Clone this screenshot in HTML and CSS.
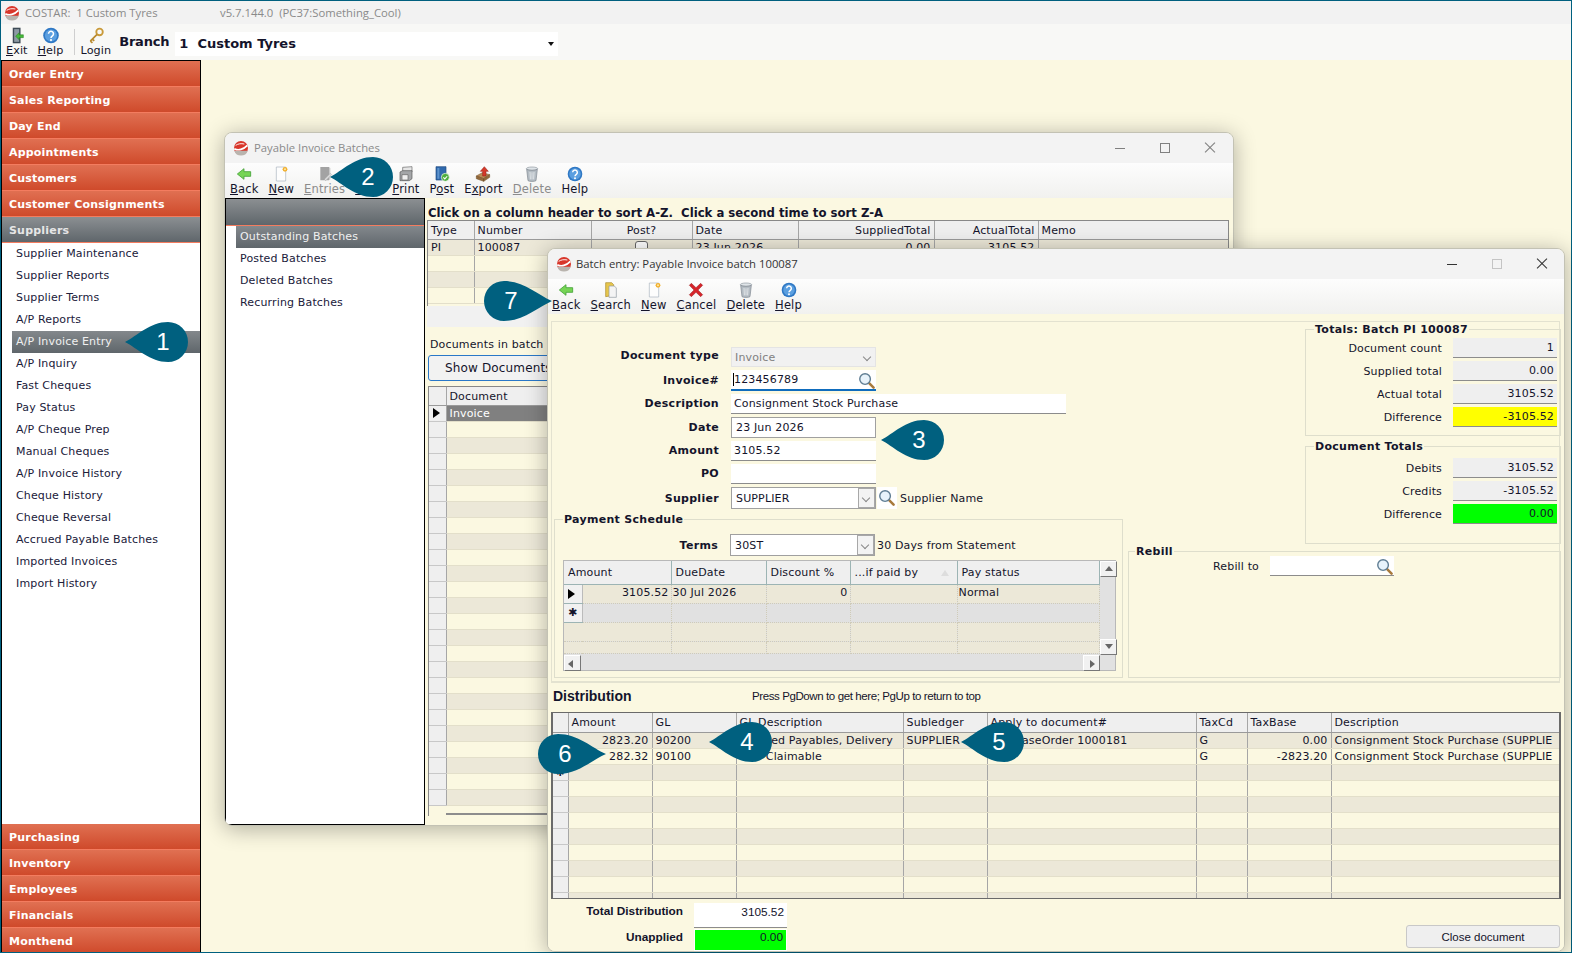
FILE: index.html
```html
<!DOCTYPE html>
<html lang="en">
<head>
  <meta charset="UTF-8"/>
  <title>COSTAR: 1 Custom Tyres</title>
  <link rel="stylesheet" href="styles.css">
</head>
<body>
  <!-- icon set -->
  <svg class="sprite" aria-hidden="true">
    <symbol id="i-logo" viewBox="0 0 24 24">
      <circle cx="12" cy="12" r="10.5" fill="#d8362a"/>
      <path d="M2 16a10.5 10.5 0 0 0 20 0z" fill="#b9b4ae"/>
      <path d="M2 13c6 3.5 14 1 19.5-5" fill="none" stroke="#fff" stroke-width="2.6"/>
      <path d="M4 8c4-2.5 8-3 13-2" fill="none" stroke="#fff" stroke-width="1.4"/>
    </symbol>
    <symbol id="i-exit" viewBox="0 0 24 24">
      <path d="M6 1h11v22H6z" fill="#3d4a55"/>
      <path d="M8 3h7v18H8z" fill="#8d9aa4"/>
      <path d="M10 13l5-5v3h6v4h-6v3z" fill="#46b83a" stroke="#24801c" stroke-width=".7"/>
    </symbol>
    <symbol id="i-help" viewBox="0 0 24 24">
      <circle cx="12" cy="12" r="11" fill="#2f78c4"/>
      <circle cx="12" cy="12" r="8.6" fill="#5b9fe0"/>
      <path d="M8.500 9.500a3.500 3.500 0 1 1 5.500 3c-1.400 1-2 1.500-2 3" fill="none" stroke="#fff" stroke-width="2.200"/>
      <circle cx="12" cy="18.500" r="1.500" fill="#fff"/>
    </symbol>
    <symbol id="i-key" viewBox="0 0 24 24">
      <circle cx="17" cy="7" r="4.6" fill="none" stroke="#c99a3a" stroke-width="2.6"/>
      <path d="M13.5 10.5L4 20m0 0l3 2.5M7 17l2.5 2.5" fill="none" stroke="#b98a2e" stroke-width="2.4"/>
    </symbol>
    <symbol id="i-back" viewBox="0 0 24 24">
      <path d="M2 12l10-8v4.5h10v7H12V20z" fill="#76d455" stroke="#3f9f32" stroke-width="1.2"/>
    </symbol>
    <symbol id="i-new" viewBox="0 0 24 24">
      <path d="M5 1.5h14v21H5z" fill="#fdfdfd" stroke="#a9b4c0"/>
      <circle cx="18" cy="5" r="3.6" fill="#f2b02e"/>
      <circle cx="18" cy="5" r="1.5" fill="#ffe9a8"/>
    </symbol>
    <symbol id="i-entries" viewBox="0 0 24 24">
      <path d="M5 1.5h13v20H5z" fill="#a3a3a3"/>
      <path d="M18 1.5l2 1.5v17l-2 1.5z" fill="#c9c9c9"/>
      <path d="M11 20l9-9 2 2-9 9z" fill="#dcdcdc" stroke="#999" stroke-width=".6"/>
    </symbol>
    <symbol id="i-print" viewBox="0 0 24 24">
      <path d="M7 2l14-1v8l-14 1z" fill="#e6e6e6" stroke="#666"/>
      <path d="M3 9l4-2h14v12l-4 3H3z" fill="#a4a6a8" stroke="#555"/>
      <path d="M6 13h9v8H6z" fill="#efefef" stroke="#666"/>
    </symbol>
    <symbol id="i-post" viewBox="0 0 24 24">
      <path d="M3 1h15v20H3z" fill="#2f69ad" stroke="#1f4a80"/>
      <path d="M5 3h3v16H5z" fill="#5e93cc"/>
      <circle cx="17" cy="17" r="6" fill="#4eae3e" stroke="#fff"/>
      <path d="M14 17l2.2 2.4 3.6-4" fill="none" stroke="#fff" stroke-width="1.6"/>
    </symbol>
    <symbol id="i-export" viewBox="0 0 24 24">
      <path d="M2 15l9-5 11 3-9 6z" fill="#b98a55" stroke="#6f4d28" stroke-width=".8"/>
      <path d="M2 15v4l11 4v-4zM13 19v4l9-6v-4z" fill="#93693a" stroke="#6f4d28" stroke-width=".8"/>
      <path d="M14 1l6 7h-3.500v7h-5V8H8z" fill="#d43a2a" stroke="#96201a" stroke-width=".8"/>
    </symbol>
    <symbol id="i-trash" viewBox="0 0 24 24">
      <ellipse cx="12" cy="4" rx="8.500" ry="2.500" fill="#dfe4e8" stroke="#8e979f"/>
      <path d="M4 5l2 17c2 1.500 10 1.500 12 0l2-17c-3 2-13 2-16 0z" fill="#b4bcc3" stroke="#7e878f"/>
      <path d="M9 9l.6 11M12 9.500V20M15 9l-.6 11" stroke="#eef1f3" stroke-width="1.100"/>
    </symbol>
    <symbol id="i-search" viewBox="0 0 24 24">
      <path d="M4 1h9l3 3v16l-12 2z" fill="#e7c64c" stroke="#a9892a"/>
      <path d="M9 6h8l3 3v14H9z" fill="#f4f4f4" stroke="#8f98a0"/>
    </symbol>
    <symbol id="i-cancel" viewBox="0 0 24 24">
      <path d="M2 5l3-3 7 6.500L19 2l3 3-7 7 7 7-3 3-7-6.500L5 22l-3-3 7-7z" fill="#d6242a" stroke="#8f1418" stroke-width=".7"/>
    </symbol>
    <symbol id="i-lens" viewBox="0 0 24 24">
      <path d="M15 15l7 7" stroke="#a87a3c" stroke-width="3.600" stroke-linecap="round"/>
      <circle cx="10" cy="10" r="7.500" fill="#e8f3fb" stroke="#5f7d93" stroke-width="2"/>
    </symbol>
  </svg>

  <div class="app">
    <div class="app-title">
      <svg class="logo"><use href="#i-logo"/></svg>
      <span class="app-name">COSTAR:&nbsp; 1 Custom Tyres</span>
      <span class="app-version">v5.7.144.0&nbsp; (PC37:Something_Cool)</span>
    </div>
    <div class="toolbar app-toolbar">
      <button class="tool"><svg><use href="#i-exit"/></svg><span><u>E</u>xit</span></button>
      <button class="tool"><svg><use href="#i-help"/></svg><span><u>H</u>elp</span></button>
      <div class="tool-sep"></div>
      <button class="tool"><svg><use href="#i-key"/></svg><span>Login</span></button>
      <div class="branch-label">Branch</div>
      <div class="branch-select">1&nbsp; Custom Tyres<i class="drop-arrow"></i></div>
    </div>
    <div class="app-main">
      <nav class="sidebar">
        <a class="nav-head">Order Entry</a>
        <a class="nav-head">Sales Reporting</a>
        <a class="nav-head">Day End</a>
        <a class="nav-head">Appointments</a>
        <a class="nav-head">Customers</a>
        <a class="nav-head">Customer Consignments</a>
        <a class="nav-head active">Suppliers</a>
        <div class="nav-list">
          <a class="nav-item">Supplier Maintenance</a>
          <a class="nav-item">Supplier Reports</a>
          <a class="nav-item">Supplier Terms</a>
          <a class="nav-item">A/P Reports</a>
          <a class="nav-item active">A/P Invoice Entry</a>
          <a class="nav-item">A/P Inquiry</a>
          <a class="nav-item">Fast Cheques</a>
          <a class="nav-item">Pay Status</a>
          <a class="nav-item">A/P Cheque Prep</a>
          <a class="nav-item">Manual Cheques</a>
          <a class="nav-item">A/P Invoice History</a>
          <a class="nav-item">Cheque History</a>
          <a class="nav-item">Cheque Reversal</a>
          <a class="nav-item">Accrued Payable Batches</a>
          <a class="nav-item">Imported Invoices</a>
          <a class="nav-item">Import History</a>
        </div>
        <a class="nav-head">Purchasing</a>
        <a class="nav-head">Inventory</a>
        <a class="nav-head">Employees</a>
        <a class="nav-head">Financials</a>
        <a class="nav-head">Monthend</a>
      </nav>
    </div>
  </div>

  <!-- Payable Invoice Batches window -->
  <section class="window win-batches">
    <div class="win-title inactive">
      <svg class="logo"><use href="#i-logo"/></svg>
      <span>Payable Invoice Batches</span>
      <div class="win-controls">
        <i class="ctl-min"></i><i class="ctl-max"></i><i class="ctl-close"></i>
      </div>
    </div>
    <div class="toolbar win-toolbar">
      <button class="tool"><svg><use href="#i-back"/></svg><span><u>B</u>ack</span></button>
      <button class="tool"><svg><use href="#i-new"/></svg><span><u>N</u>ew</span></button>
      <button class="tool off"><svg><use href="#i-entries"/></svg><span><u>E</u>ntries</span></button>
      <button class="tool tool-void"><svg></svg><span><u>V</u>oid</span></button>
      <button class="tool"><svg><use href="#i-print"/></svg><span><u>P</u>rint</span></button>
      <button class="tool"><svg><use href="#i-post"/></svg><span>P<u>o</u>st</span></button>
      <button class="tool"><svg><use href="#i-export"/></svg><span>E<u>x</u>port</span></button>
      <button class="tool off"><svg><use href="#i-trash"/></svg><span><u>D</u>elete</span></button>
      <button class="tool"><svg><use href="#i-help"/></svg><span>Help</span></button>
    </div>
    <div class="batches-body">
      <div class="batch-nav">
        <div class="batch-nav-head"></div>
        <a class="batch-item active">Outstanding Batches</a>
        <a class="batch-item">Posted Batches</a>
        <a class="batch-item">Deleted Batches</a>
        <a class="batch-item">Recurring Batches</a>
      </div>
      <div class="batch-content">
        <div class="sort-hint">Click on a column header to sort A-Z.&nbsp; Click a second time to sort Z-A</div>
        <div class="batch-grid">
          <table class="grid">
            <colgroup><col class="c46"><col class="c117"><col class="c101"><col class="c106"><col class="c136"><col class="c104"><col class="c190"></colgroup>
            <tr class="grid-head"><th>Type</th><th>Number</th><th class="mid">Post?</th><th>Date</th><th class="num">SuppliedTotal</th><th class="num">ActualTotal</th><th>Memo</th></tr>
            <tr class="odd"><td>PI</td><td>100087</td><td class="mid"><i class="check"></i></td><td>23 Jun 2026</td><td class="num">0.00</td><td class="num">3105.52</td><td></td></tr>
            <tr><td></td><td></td><td></td><td></td><td></td><td></td><td></td></tr>
            <tr class="odd"><td></td><td></td><td></td><td></td><td></td><td></td><td></td></tr>
            <tr><td></td><td></td><td></td><td></td><td></td><td></td><td></td></tr>
          </table>
        </div>
        <div class="batch-bar"></div>
        <div class="docs-caption">Documents in batch</div>
        <button class="show-docs">Show Documents</button>
        <div class="docs-grid">
          <table class="grid">
            <colgroup><col class="c17"><col class="c784"></colgroup>
            <tr class="grid-head"><th></th><th>Document</th></tr>
            <tr class="selected"><th class="row-head"><i class="row-arrow"></i></th><td>Invoice</td></tr>
            <tr><th class="row-head"></th><td></td></tr>
            <tr class="odd"><th class="row-head"></th><td></td></tr>
            <tr><th class="row-head"></th><td></td></tr>
            <tr class="odd"><th class="row-head"></th><td></td></tr>
            <tr><th class="row-head"></th><td></td></tr>
            <tr class="odd"><th class="row-head"></th><td></td></tr>
            <tr><th class="row-head"></th><td></td></tr>
            <tr class="odd"><th class="row-head"></th><td></td></tr>
            <tr><th class="row-head"></th><td></td></tr>
            <tr class="odd"><th class="row-head"></th><td></td></tr>
            <tr><th class="row-head"></th><td></td></tr>
            <tr class="odd"><th class="row-head"></th><td></td></tr>
            <tr><th class="row-head"></th><td></td></tr>
            <tr class="odd"><th class="row-head"></th><td></td></tr>
            <tr><th class="row-head"></th><td></td></tr>
            <tr class="odd"><th class="row-head"></th><td></td></tr>
            <tr><th class="row-head"></th><td></td></tr>
            <tr class="odd"><th class="row-head"></th><td></td></tr>
            <tr><th class="row-head"></th><td></td></tr>
            <tr class="odd"><th class="row-head"></th><td></td></tr>
            <tr><th class="row-head"></th><td></td></tr>
            <tr class="odd"><th class="row-head"></th><td></td></tr>
            <tr><th class="row-head"></th><td></td></tr>
            <tr class="odd"><th class="row-head"></th><td></td></tr>
          </table>
          <div class="docs-scroll"></div>
        </div>
      </div>
    </div>
  </section>

  <!-- Batch entry window -->
  <section class="window win-entry">
    <div class="win-title">
      <svg class="logo"><use href="#i-logo"/></svg>
      <span>Batch entry: Payable Invoice batch 100087</span>
      <div class="win-controls">
        <i class="ctl-min"></i><i class="ctl-max off"></i><i class="ctl-close"></i>
      </div>
    </div>
    <div class="toolbar win-toolbar">
      <button class="tool"><svg><use href="#i-back"/></svg><span><u>B</u>ack</span></button>
      <button class="tool"><svg><use href="#i-search"/></svg><span><u>S</u>earch</span></button>
      <button class="tool"><svg><use href="#i-new"/></svg><span><u>N</u>ew</span></button>
      <button class="tool"><svg><use href="#i-cancel"/></svg><span><u>C</u>ancel</span></button>
      <button class="tool"><svg><use href="#i-trash"/></svg><span><u>D</u>elete</span></button>
      <button class="tool"><svg><use href="#i-help"/></svg><span><u>H</u>elp</span></button>
    </div>
    <div class="entry-body">
      <div class="entry-panel">
        <div class="entry-left">
          <div class="doc-form">
            <label class="h20">Document type</label>
            <div class="field h20 disabled">Invoice<i class="chevron"></i></div>
            <label class="h21">Invoice#</label>
            <div class="field h21 focused"><i class="caret"></i>123456789<svg class="lens"><use href="#i-lens"/></svg></div>
            <label class="h20">Description</label>
            <div class="field h20 wide">Consignment Stock Purchase</div>
            <label class="h21">Date</label>
            <div class="field h21 boxed">23 Jun 2026</div>
            <label class="h20">Amount</label>
            <div class="field h20">3105.52</div>
            <label class="h20">PO</label>
            <div class="field h20"></div>
            <label class="h22">Supplier</label>
            <div class="with-note">
              <div class="field h22 boxed">SUPPLIER<b class="drop-btn"><i class="chevron"></i></b></div>
              <svg class="lens free"><use href="#i-lens"/></svg>
              <span class="note">Supplier Name</span>
            </div>
          </div>

          <fieldset class="group pay-group">
            <legend>Payment Schedule</legend>
            <div class="terms-row">
              <label>Terms</label>
              <div class="field h22 boxed">30ST<b class="drop-btn"><i class="chevron"></i></b></div>
              <span class="note">30 Days from Statement</span>
            </div>
            <div class="pay-grid">
              <table class="grid raised">
                <colgroup><col class="c18"><col class="c89"><col class="c95"><col class="c84"><col class="c107"><col class="c142"></colgroup>
                <tr class="grid-head"><th colspan="2">Amount</th><th>DueDate</th><th>Discount %</th><th>...if paid by<i class="sort-mark"></i></th><th>Pay status</th></tr>
                <tr class="odd"><th class="row-head"><i class="row-arrow"></i></th><td class="num">3105.52</td><td>30 Jul 2026</td><td class="num">0</td><td></td><td>Normal</td></tr>
                <tr class="new-row"><th class="row-head">✱</th><td></td><td></td><td></td><td></td><td></td></tr>
                <tr class="odd blank"><td colspan="2"></td><td></td><td></td><td></td><td></td></tr>
                <tr class="odd blank short"><td colspan="2"></td><td></td><td></td><td></td><td></td></tr>
              </table>
              <div class="vscroll"><i class="sb-btn up"></i><i class="sb-btn down"></i></div>
              <div class="hscroll"><i class="sb-btn left"></i><i class="sb-btn right"></i></div>
            </div>
          </fieldset>
        </div>

        <div class="entry-right">
          <fieldset class="group totals-group">
            <legend>Totals: Batch PI 100087</legend>
            <div class="total-row"><label>Document count</label><output>1</output></div>
            <div class="total-row"><label>Supplied total</label><output>0.00</output></div>
            <div class="total-row"><label>Actual total</label><output>3105.52</output></div>
            <div class="total-row"><label>Difference</label><output class="warn">-3105.52</output></div>
          </fieldset>
          <fieldset class="group totals-group doc-totals">
            <legend>Document Totals</legend>
            <div class="total-row"><label>Debits</label><output>3105.52</output></div>
            <div class="total-row"><label>Credits</label><output>-3105.52</output></div>
            <div class="total-row"><label>Difference</label><output class="ok">0.00</output></div>
          </fieldset>
          <fieldset class="group rebill-group">
            <legend>Rebill</legend>
            <div class="rebill-row">
              <label>Rebill to</label>
              <div class="field h20"><svg class="lens"><use href="#i-lens"/></svg></div>
            </div>
          </fieldset>
        </div>
      </div>

      <div class="dist-head">
        <h2>Distribution</h2>
        <p>Press PgDown to get here; PgUp to return to top</p>
      </div>
      <div class="dist-grid">
        <table class="grid">
          <colgroup><col class="d15"><col class="d84"><col class="d84"><col class="d167"><col class="d84"><col class="d209"><col class="d51"><col class="d84"><col class="d228"></colgroup>
          <tr class="grid-head"><th></th><th>Amount</th><th>GL</th><th>GL Description</th><th>Subledger</th><th>Apply to document#</th><th>TaxCd</th><th>TaxBase</th><th>Description</th></tr>
          <tr class="odd"><th class="row-head"><i class="row-arrow"></i></th><td class="num">2823.20</td><td>90200</td><td>Accrued Payables, Delivery</td><td>SUPPLIER</td><td>PurchaseOrder 1000181</td><td>G</td><td class="num">0.00</td><td>Consignment Stock Purchase (SUPPLIE</td></tr>
          <tr><th class="row-head"></th><td class="num">282.32</td><td>90100</td><td>GST Claimable</td><td></td><td></td><td>G</td><td class="num">-2823.20</td><td>Consignment Stock Purchase (SUPPLIE</td></tr>
          <tr class="odd"><th class="row-head">✱</th><td></td><td></td><td></td><td></td><td></td><td></td><td></td><td></td></tr>
          <tr><th class="row-head"></th><td></td><td></td><td></td><td></td><td></td><td></td><td></td><td></td></tr>
          <tr class="odd"><th class="row-head"></th><td></td><td></td><td></td><td></td><td></td><td></td><td></td><td></td></tr>
          <tr><th class="row-head"></th><td></td><td></td><td></td><td></td><td></td><td></td><td></td><td></td></tr>
          <tr class="odd"><th class="row-head"></th><td></td><td></td><td></td><td></td><td></td><td></td><td></td><td></td></tr>
          <tr><th class="row-head"></th><td></td><td></td><td></td><td></td><td></td><td></td><td></td><td></td></tr>
          <tr class="odd"><th class="row-head"></th><td></td><td></td><td></td><td></td><td></td><td></td><td></td><td></td></tr>
          <tr><th class="row-head"></th><td></td><td></td><td></td><td></td><td></td><td></td><td></td><td></td></tr>
          <tr class="odd"><th class="row-head"></th><td></td><td></td><td></td><td></td><td></td><td></td><td></td><td></td></tr>
        </table>
      </div>
      <div class="entry-foot">
        <div class="foot-totals">
          <label>Total Distribution</label><output>3105.52</output>
          <label>Unapplied</label><output class="ok">0.00</output>
        </div>
        <button class="close-doc">Close document</button>
      </div>
    </div>
  </section>

  <!-- numbered callouts -->
  <div class="callout to-left c1"><svg viewBox="0 0 63 40"><path d="M0 20C12 14 25 0 43 0a20 20 0 0 1 0 40C25 40 12 26 0 20z"/></svg><span>1</span></div>
  <div class="callout to-left c2"><svg viewBox="0 0 63 40"><path d="M0 20C12 14 25 0 43 0a20 20 0 0 1 0 40C25 40 12 26 0 20z"/></svg><span>2</span></div>
  <div class="callout to-left c3"><svg viewBox="0 0 63 40"><path d="M0 20C12 14 25 0 43 0a20 20 0 0 1 0 40C25 40 12 26 0 20z"/></svg><span>3</span></div>
  <div class="callout to-left c4"><svg viewBox="0 0 63 40"><path d="M0 20C12 14 25 0 43 0a20 20 0 0 1 0 40C25 40 12 26 0 20z"/></svg><span>4</span></div>
  <div class="callout to-left c5"><svg viewBox="0 0 63 40"><path d="M0 20C12 14 25 0 43 0a20 20 0 0 1 0 40C25 40 12 26 0 20z"/></svg><span>5</span></div>
  <div class="callout to-right c6"><svg viewBox="0 0 68 40"><path d="M68 20C54 14 40 0 20 0a20 20 0 0 0 0 40C40 40 54 26 68 20z"/></svg><span>6</span></div>
  <div class="callout to-right c7"><svg viewBox="0 0 68 40"><path d="M68 20C54 14 40 0 20 0a20 20 0 0 0 0 40C40 40 54 26 68 20z"/></svg><span>7</span></div>
</body>
</html>
```

FILE: styles.css
```css
/* Reset & Base */
*, *::before, *::after { box-sizing: border-box; }
body {
  margin: 0;
  width: 1572px;
  height: 953px;
  overflow: hidden;
  position: relative;
  font-family: "DejaVu Sans", Verdana, sans-serif;
  font-size: 11px;
  letter-spacing: .15px;
  color: #14142b;
  background: #fbf8e1;
}
button { font: inherit; color: inherit; letter-spacing: inherit; }
i { display: block; }
.sprite { position: absolute; width: 0; height: 0; }

/* App frame */
.app {
  width: 1572px;
  height: 953px;
  border: 1px solid #00607f;
  overflow: hidden;
  display: flex;
  flex-direction: column;
}
.app-title {
  height: 23px;
  flex: none;
  display: flex;
  align-items: center;
  background: #f2f2f2;
  padding-left: 3px;
  color: #8a8a8a;
  font-family: "Open Sans", sans-serif;
  font-size: 11.3px;
  letter-spacing: 0;
}
.logo { width: 16px; height: 16px; flex: none; }
.app-name { margin-left: 5px; width: 195px; }
.toolbar { display: flex; align-items: flex-start; background: linear-gradient(#fdfdfd, #f1f1ef); }
.app-toolbar { height: 36px; flex: none; padding: 3px 0 0 5px; gap: 10px; background: #f8f8f6; }
.tool {
  display: flex;
  flex-direction: column;
  align-items: center;
  background: none;
  border: none;
  padding: 0;
  font-size: 11.5px;
  line-height: 14px;
  white-space: nowrap;
}
.app-toolbar .tool { font-size: 11.2px; letter-spacing: .1px; }
.tool svg { width: 20px; height: 17px; display: block; }
.win-toolbar .tool svg { height: 16px; }
.tool.off { color: #8b8b8b; }
.tool-void { margin-right: 2px; }
.tool-sep { width: 1px; height: 26px; margin: 2px -4px 0 0; background: #cfcfcf; }
.branch-label { font-size: 13px; font-weight: bold; margin: 7px 0 0 -2px; letter-spacing: -.2px; }
.branch-select {
  width: 383px;
  height: 24px;
  margin: 5px 0 0 -4px;
  padding-left: 4px;
  background: #fff;
  font-size: 13px;
  font-weight: bold;
  line-height: 23px;
  letter-spacing: 0;
  position: relative;
}
.drop-arrow {
  position: absolute;
  right: 4px;
  top: 10px;
  border: 3px solid transparent;
  border-top: 4px solid #111;
}
.app-main { flex: 1; display: flex; min-height: 0; }

/* Sidebar */
.sidebar {
  width: 200px;
  display: flex;
  flex-direction: column;
  border-top: 1px solid #000;
  border-left: 1px solid #000;
  border-right: 1px solid #000;
  background: #fff;
}
.nav-head {
  height: 26px;
  flex: none;
  padding-left: 7px;
  line-height: 27px;
  font-weight: bold;
  color: #fff;
  letter-spacing: .2px;
  background: linear-gradient(#e07052, #cf4a2b);
  border-bottom: 1px solid #f47c5f;
}
.nav-head.active { color: #e6e6e6; background: linear-gradient(#8b8f92, #5f666b); border-bottom-color: #f47c5f; }
.nav-list { flex: none; height: 581px; }
.nav-item { display: block; height: 22px; line-height: 22px; padding-left: 14px; color: #20203a; }
.nav-item.active { margin-left: 10px; padding-left: 4px; color: #f0f0f0; background: linear-gradient(#83888c, #5f666b); }

/* Windows sit on the desktop canvas */
.window {
  position: absolute;
  display: flex;
  flex-direction: column;
  background: #fbf8e1;
  border: 1px solid #c3c2b4;
  border-radius: 8px;
  box-shadow: 0 3px 22px rgba(0,0,0,.3);
  overflow: hidden;
}
.win-batches { left: 224px; top: 132px; width: 1010px; height: 694px; }
.win-entry { left: 547px; top: 248px; width: 1018px; height: 704px; }
.win-title {
  height: 30px;
  flex: none;
  display: flex;
  align-items: center;
  padding: 0 0 1px 8px;
  gap: 4px;
  background: #f3f3f3;
  font-family: "Open Sans", sans-serif;
  font-size: 11.3px;
  letter-spacing: 0;
  color: #333;
}
.win-title.inactive { color: #8a8a8a; gap: 5px; }
.win-controls { margin-left: auto; display: flex; align-items: center; gap: 35px; padding-right: 17px; }
.win-batches .win-controls { padding-right: 18px; }
.win-controls i { width: 10px; height: 10px; position: relative; }
.ctl-min::before { content: ""; position: absolute; left: 0; right: 0; top: 5px; height: 1px; background: #333; }
.ctl-max { border: 1px solid #333; }
.ctl-max.off { border-color: #c4c4c4; }
.ctl-close::before, .ctl-close::after {
  content: "";
  position: absolute;
  left: -2px;
  right: -2px;
  top: 4px;
  height: 1px;
  background: #333;
  transform: rotate(45deg);
}
.ctl-close::after { transform: rotate(-45deg); }
.win-batches .win-controls i { opacity: .6; }
.win-toolbar { height: 35px; flex: none; padding: 3px 0 0 4px; gap: 10px; }
.win-batches .win-toolbar { padding-left: 5px; }

/* Batches window */
.batches-body { flex: 1; display: flex; min-height: 0; }
.batch-nav { width: 200px; flex: none; border: 1px solid #000; background: #fff; }
.batch-nav-head { height: 27px; background: linear-gradient(#8b8f92, #5f666b); border-bottom: 1px solid #f47c5f; }
.batch-item { display: block; height: 22px; line-height: 22px; padding-left: 14px; color: #20203a; }
.batch-item.active { margin-left: 10px; padding-left: 4px; color: #f0f0f0; background: linear-gradient(#83888c, #5f666b); }
.batch-content { flex: 1; padding-left: 2px; min-width: 0; }
.sort-hint { height: 22px; padding: 8px 0 0 1px; line-height: 14px; font-size: 13px; font-weight: bold; font-stretch: condensed; letter-spacing: 0; }
.batch-grid { height: 86px; overflow: hidden; border: 1px solid #888; border-bottom: none; width: 802px; }
.batch-grid .grid-head th, .docs-grid .grid-head th { height: 18px; padding-top: 1px; }
.batch-bar { height: 21px; width: 802px; background: #f1f1f1; }
.docs-caption { height: 28px; line-height: 36px; padding-left: 3px; }
.show-docs {
  display: block;
  width: 300px;
  margin-left: 1px;
  height: 26px;
  padding: 0 0 0 16px;
  text-align: left;
  font-size: 12px;
  background: #f2f2f2;
  border: 1px solid #2a78c8;
  border-radius: 3px;
}
.docs-grid { margin: 5px 0 0 1px; width: 801px; border: 1px solid #888; border-bottom: none; height: 430px; overflow: hidden; }
.docs-scroll { height: 2px; margin: 7px 0 0 17px; background: #8d8d8d; }

/* Grids */
.grid { width: 100%; border-collapse: collapse; table-layout: fixed; }
.grid th, .grid td {
  height: 16px;
  padding: 0 3px;
  font-weight: normal;
  text-align: left;
  white-space: nowrap;
  overflow: hidden;
  line-height: 15px;
  border-right: 1px solid #a6a6a6;
  border-bottom: 1px solid #e3dfca;
}
.grid-head th { height: 19px; background: #efefef; border-bottom: 1px solid #9a9a9a; }
.grid .odd td { background: #ece8d8; }
.grid .selected td { background: #808080; color: #fff; }
.grid .row-head { background: #efefef; padding: 0; position: relative; border-bottom-color: #c8c8c8; text-align: center; font-size: 10px; }
.grid .num { text-align: right; }
.grid .mid { text-align: center; }
.row-arrow { margin-left: 4px; width: 0; border: 5px solid transparent; border-left: 7px solid #000; border-right: none; }
.check { width: 13px; height: 13px; border: 1px solid #666; border-radius: 3px; background: #fff; margin: 1px auto 0; }
.c17 { width: 17px; } .c46 { width: 46px; } .c117 { width: 117px; } .c101 { width: 101px; }
.c106 { width: 106px; } .c136 { width: 136px; } .c104 { width: 104px; } .c190 { width: 190px; } .c784 { width: 782px; }

/* Entry window */
.entry-body { flex: 1; padding: 7px 2px 0 3px; min-height: 0; background: #fbf8e1; }
.entry-panel {
  height: 362px;
  display: flex;
  border: 1px solid #e3e2d0;
  border-bottom-width: 2px;
  margin-right: 2px;
}
.entry-left { width: 574px; flex: none; padding-left: 2px; }
.entry-right { flex: 1; display: flex; flex-direction: column; align-items: flex-end; padding: 1px 1px 0 2px; }

.doc-form {
  display: grid;
  grid-template-columns: 165px 1fr;
  column-gap: 12px;
  row-gap: 3px;
  padding-top: 25px;
  align-items: center;
}
.doc-form label, .terms-row label { font-weight: bold; text-align: right; letter-spacing: .3px; }
.doc-form label.h20 { line-height: 20px; }
.doc-form label.h20:first-child { line-height: 18px; }
.doc-form label.h21 { line-height: 21px; }
.doc-form label.h22 { line-height: 24px; }
.field {
  width: 145px;
  padding-left: 3px;
  background: #fff;
  border-bottom: 1px solid #8c8c8c;
  display: flex;
  align-items: center;
  position: relative;
  white-space: nowrap;
}
.h20 { height: 20px; } .h21 { height: 21px; } .h22 { height: 22px; }
.field.wide { width: 335px; }
.field.disabled { background: #f1f1f1; color: #808080; border: 1px solid #e4e4e4; padding-left: 3px; }
.field.focused { border-bottom: 2px solid #0f6cbd; padding-left: 2px; }
.field.boxed { border: 1px solid #a0a0a0; padding-left: 4px; }
.caret { width: 1px; height: 13px; background: #000; }
.chevron {
  position: absolute;
  right: 5px;
  top: 6px;
  width: 6px;
  height: 6px;
  border-right: 1px solid #888;
  border-bottom: 1px solid #888;
  transform: rotate(45deg);
}
.drop-btn {
  position: absolute;
  right: 0;
  top: 0;
  bottom: 0;
  width: 17px;
  background: #f3f3f3;
  border: 1px solid #a8a8a8;
}
.lens { position: absolute; right: 1px; top: 2px; width: 17px; height: 17px; }
.lens.free { position: static; width: 20px; height: 22px; padding: 2px 2px 3px 1px; background: #fff; flex: none; }
.with-note { display: flex; align-items: center; gap: 1px; }
.note { margin-left: 2px; white-space: nowrap; }

.group { margin: 0; padding: 0; border: 1px solid #dedecc; min-width: 0; }
.group legend { padding: 0 1px; margin-left: 8px; font-weight: bold; line-height: 13px; letter-spacing: .3px; }
.pay-group { margin-top: 4px; width: 569px; height: 165px; }
.terms-row { display: flex; align-items: center; margin-top: 8px; }
.terms-row label { width: 163px; margin-right: 12px; }
.pay-grid {
  margin: 4px 0 0 8px;
  width: 553px;
  height: 111px;
  display: grid;
  grid-template-columns: 1fr 18px;
  grid-template-rows: 94px 17px;
  background: #e1e1e1;
  border: 1px solid #b8b8b8;
}
.grid.raised { align-self: start; }
.raised th, .raised td { height: 19px; vertical-align: top; padding: 0 2px 0 1px; border-right: 1px dotted #cfcbb8; border-bottom: 1px dotted #cfcbb8; }
.raised .grid-head th { height: 23px; padding: 4px 3px 0 4px; border-right: 1px solid #9cb4b4; border-bottom: 1px solid #9cb4b4; position: relative; }
.raised .new-row td { background: #e1e1e1; }
.raised .new-row .row-head, .raised .row-head { background: #f1f1f1; border-right: 1px solid #bbb; border-bottom: 1px solid #9cb4b4; font-size: 11px; padding: 0; vertical-align: middle; }
.raised .short td { height: 12px; }
.sort-mark { position: absolute; right: 8px; top: 9px; border: 4px solid transparent; border-top: none; border-bottom: 6px solid #ddd; }
.c18 { width: 18px; } .c89 { width: 89px; } .c95 { width: 95px; } .c84 { width: 84px; } .c107 { width: 107px; } .c142 { width: 142px; }
.vscroll { display: flex; flex-direction: column; justify-content: space-between; }
.hscroll { display: flex; justify-content: space-between; }
.sb-btn { width: 17px; height: 16px; background: #f1f1f1; border: 1px solid #fff; border-right-color: #777; border-bottom-color: #777; position: relative; flex: none; }
.sb-btn::after { content: ""; position: absolute; left: 4px; top: 4px; border: 4px solid transparent; }
.up::after { border-top: none; border-bottom: 5px solid #666; }
.down::after { border-bottom: none; border-top: 5px solid #666; }
.left::after { left: 3px; border-left: none; border-right: 5px solid #666; }
.right::after { left: 6px; border-right: none; border-left: 5px solid #666; }

.totals-group { width: 256px; height: 113px; }
.doc-totals { margin-top: 4px; height: 104px; }
.total-row { display: flex; justify-content: flex-end; align-items: center; gap: 11px; height: 20px; margin: 3px 3px 0 0; }
.total-row:first-of-type { margin-top: 2px; }
.doc-totals .total-row:first-of-type { margin-top: 5px; }
.total-row label { white-space: nowrap; }
.total-row output, .foot-totals output {
  width: 104px;
  height: 20px;
  line-height: 19px;
  padding-right: 3px;
  text-align: right;
  background: #efefef;
  border-bottom: 1px solid #8c8c8c;
}
.total-row .warn { background: #ff0; }
.foot-totals .ok, .total-row .ok { background: #0f0; }
.rebill-group { width: 433px; height: 133px; margin-top: 1px; }
.rebill-group legend { margin-left: 6px; }
.rebill-row { display: flex; align-items: center; margin-top: -2px; }
.rebill-row label { width: 130px; text-align: right; margin-right: 11px; }
.rebill-row .field { width: 124px; }

.dist-head { display: flex; align-items: center; height: 29px; padding: 0 0 4px 2px; letter-spacing: 0; }
.dist-head h2 { margin: 0; width: 199px; font: bold 14px "Liberation Sans", sans-serif; }
.dist-head p { margin: 0; font: 11.5px "Liberation Sans", sans-serif; letter-spacing: -.4px; }
.dist-grid { width: 1010px; height: 187px; overflow: hidden; border: 2px solid #6a6a6a; border-top-width: 1px; border-bottom-width: 1px; }
.d15 { width: 15px; } .d84 { width: 84px; } .d167 { width: 167px; }
.d209 { width: 209px; } .d51 { width: 51px; } .d228 { width: 228px; }
.entry-foot { display: flex; justify-content: space-between; align-items: flex-end; }
.foot-totals {
  display: grid;
  grid-template-columns: 132px 93px;
  column-gap: 11px;
  row-gap: 1px;
  margin-top: 4px;
  align-items: start;
  font-family: "Liberation Sans", sans-serif;
  font-size: 11.8px;
  letter-spacing: 0;
}
.foot-totals label { font-weight: bold; text-align: right; line-height: 16px; }
.foot-totals output { width: 93px; height: 25px; line-height: 19px; background: #fff; }
.foot-totals .ok { height: 22px; line-height: 14px; border: 1px solid #fff; }
.close-doc {
  width: 154px;
  height: 23px;
  margin: 0 2px 3px 0;
  background: #efefef;
  border: 1px solid #c8c8c8;
  border-radius: 3px;
  font-family: "Liberation Sans", sans-serif;
  font-size: 11.5px;
  letter-spacing: 0;
}

/* Numbered callouts */
.callout { position: absolute; height: 40px; letter-spacing: 0; }
.callout svg { display: block; width: 100%; height: 100%; fill: #00607f; }
.callout span {
  position: absolute;
  top: 0;
  width: 50px;
  text-align: center;
  font: 24px/40px "Liberation Sans", sans-serif;
  color: #fff;
}
.to-left { width: 63px; }
.to-left span { right: 0; }
.to-right { width: 68px; }
.to-right span { left: 2px; }
.c1 { left: 125px; top: 322px; }
.c2 { left: 330px; top: 157px; }
.c3 { left: 881px; top: 420px; }
.c4 { left: 709px; top: 722px; }
.c5 { left: 961px; top: 722px; }
.c6 { left: 538px; top: 734px; }
.c7 { left: 484px; top: 281px; }
```
